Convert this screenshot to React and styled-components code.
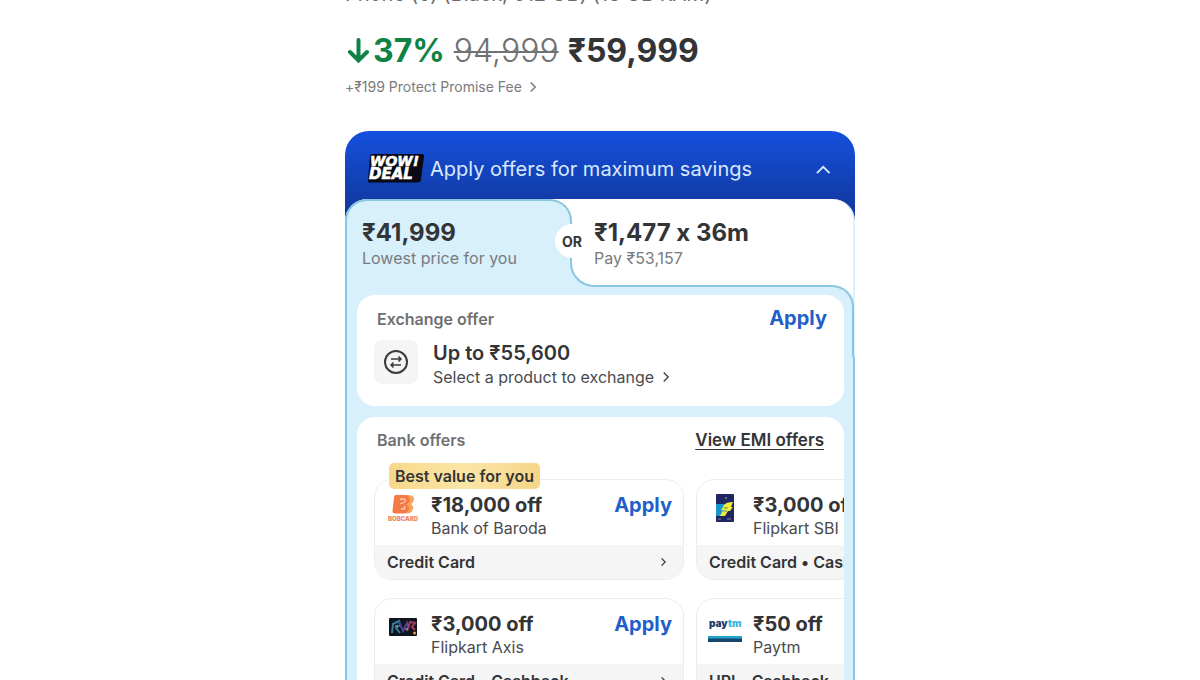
import React from "react";
import styled, { createGlobalStyle } from "styled-components";

const line = "#8ac6e0";
const sky = "#d8effc";
const ink = "#333436";
const muted = "#7a7b7d";
const link = "#1f5fcb";

const GlobalStyle = createGlobalStyle`
  *, *::before, *::after { box-sizing: border-box; }
  html, body { margin: 0; height: 100%; overflow: hidden; background: #fff; }
  body { font-family: Inter, "Liberation Sans", sans-serif; font-feature-settings: "calt" 0; color: ${ink}; }
  button { font: inherit; font-feature-settings: inherit; color: inherit; background: none; border: 0; padding: 0; cursor: pointer; text-align: left; }
  a { color: inherit; text-decoration: none; }
  h1, h2, p { margin: 0; }
  svg { display: block; flex: none; }
`;

const Page = styled.main`
  width: 100%;
  max-width: 510px;
  margin: -20px auto 0;
`;

const Title = styled.h1`
  font-size: 20px;
  line-height: 28px;
  font-weight: 400;
  white-space: nowrap;
  color: #6a6b6d;
`;

const PriceRow = styled.div`
  display: flex;
  align-items: center;
  gap: 9px;
  margin-top: 21px;
  font-size: 32px;
  line-height: 44px;
  font-weight: 700;
`;

const Discount = styled.span`
  display: flex;
  align-items: center;
  gap: 4px;
  color: #0e8345;
`;

const OldPrice = styled.s`
  font-weight: 300;
  color: #707173;
  text-decoration-thickness: 2px;
`;

const FeeLink = styled.a`
  display: flex;
  align-items: center;
  gap: 8px;
  margin-top: 4px;
  font-size: 14px;
  line-height: 20px;
  color: ${muted};
`;

const Deal = styled.section`
  margin-top: 34px;
  border-radius: 24px 24px 0 0;
  background: linear-gradient(#1450de, #123ba6 70px, #12389c) no-repeat top / 100% 88px;
`;

const DealHeader = styled.button`
  display: flex;
  align-items: center;
  gap: 5px;
  width: 100%;
  height: 68px;
  padding: 8px 25px 0 22px;
  font-size: 20px;
  line-height: 28px;
  color: #d9e9ff;

  & > span { flex: 1; }
`;

const Panel = styled.div`
  border-radius: 22px 22px 0 0;
  background: #fff;
  border-right: 2px solid #dff1fb;
`;

const Tabs = styled.div`
  position: relative;
  z-index: 1;
  display: grid;
  grid-template-columns: 227px 1fr;
  height: 88px;
`;

const Tab = styled.button`
  position: relative;
  display: flex;
  flex-direction: column;
  padding: 19px 16px 0;
  font-size: 16px;
  line-height: 22px;
  color: ${muted};

  & > * { position: relative; z-index: 1; }

  & > strong {
    font-size: 24px;
    line-height: 29px;
    font-weight: 700;
    color: ${ink};
  }
`;

const ActiveTab = styled(Tab)`
  background: ${sky};
  border: 2px solid ${line};
  border-bottom: 0;
  border-radius: 22px 22px 0 0;
  padding: 17px 15px 0;

  &::after {
    content: "";
    position: absolute;
    left: 0;
    right: -24px;
    bottom: 0;
    height: 24px;
    background: ${sky};
    z-index: 0;
  }
`;

const OtherTab = styled(Tab)`
  padding-left: 22px;

  &::before {
    content: "";
    position: absolute;
    left: -2px;
    top: 40px;
    bottom: 0;
    width: 26px;
    background: #fff;
    border: solid ${line};
    border-width: 0 0 2px 2px;
    border-bottom-left-radius: 24px;
  }
`;

const OrBadge = styled.span`
  && { position: absolute; }
  left: -17px;
  top: 25px;
  width: 34px;
  height: 34px;
  border-radius: 50%;
  background: #fff;
  color: ${ink};
  font-size: 14px;
  line-height: 36px;
  font-weight: 700;
  text-align: center;
`;

const Body = styled.div`
  position: relative;
  display: grid;
  grid-template-columns: minmax(0, 1fr);
  gap: 11px;
  margin: -2px -2px 0 0;
  padding: 10px 11px 0 10px;
  background: ${sky};
  border-left: 2px solid ${line};
  border-top-right-radius: 22px;

  &::before {
    content: "";
    position: absolute;
    left: 247px;
    right: 1px;
    top: 0;
    height: 72px;
    border: solid ${line};
    border-width: 2px 2px 0 0;
    border-top-right-radius: 22px;
  }

  &::after {
    content: "";
    position: absolute;
    right: 0;
    top: 72px;
    bottom: 0;
    width: 2px;
    background: ${line};
  }
`;

const Card = styled.section`
  position: relative;
  z-index: 1;
  overflow: hidden;
  padding: 11px 17px 17px;
  border-radius: 18px;
  background: #fff;
`;

const CardHead = styled.header`
  display: flex;
  align-items: baseline;
  justify-content: space-between;
  padding: 0 0 0 3px;

  & > h2 {
    font-size: 16px;
    line-height: 24px;
    font-weight: 600;
    color: #6f7072;
  }
`;

const ApplyButton = styled.button`
  align-self: start;
  font-size: 20px;
  line-height: 24px;
  font-weight: 700;
  color: ${link};

  ${CardHead} & { align-self: baseline; }
`;

const EmiLink = styled.a`
  margin-right: 3px;
  font-size: 17px;
  line-height: 24px;
  font-weight: 600;
  text-decoration: underline;
  text-decoration-thickness: 1px;
  text-underline-offset: 3px;
`;

const ExchangeRow = styled.div`
  display: flex;
  gap: 15px;
  margin-top: 9px;
`;

const IconTile = styled.span`
  display: grid;
  place-items: center;
  width: 44px;
  height: 44px;
  border-radius: 8px;
  background: #f5f5f5;
`;

const ExchangeText = styled.div`
  padding-bottom: 1px;

  & > p {
    font-size: 20px;
    line-height: 26px;
    font-weight: 600;
  }

  & > a {
    display: flex;
    align-items: center;
    gap: 9px;
    font-size: 16px;
    line-height: 22px;
    color: #4a4b4d;
  }
`;

const OfferGrid = styled.div`
  display: grid;
  grid-template-columns: 310px 310px;
  gap: 18px 12px;
  margin-top: 27px;
`;

const Offer = styled.article`
  position: relative;
  border: 1px solid #ececec;
  border-radius: 18px;
`;

const OfferMain = styled.div`
  display: grid;
  grid-template-columns: 34px 1fr auto;
  column-gap: 11px;
  padding: 13px 11px 6px;
`;

const OfferText = styled.div`
  white-space: nowrap;
  font-size: 16px;
  line-height: 22px;
  color: #4a4b4d;

  & > strong {
    display: block;
    font-size: 20px;
    line-height: 24px;
    font-weight: 700;
    color: ${ink};
  }
`;

const Logo = styled.span`
  display: grid;
  place-items: center;
  height: 30px;
`;

const OfferFoot = styled.button`
  display: flex;
  align-items: center;
  justify-content: space-between;
  width: 100%;
  height: 34px;
  padding: 0 17px 0 12px;
  border-radius: 0 0 17px 17px;
  background: #f5f5f5;
  font-size: 16px;
  font-weight: 600;
`;

const BestBadge = styled.span`
  position: absolute;
  left: 14px;
  top: -17px;
  padding: 0 6px;
  border-radius: 5px;
  background: linear-gradient(90deg, #f6d88a, #fbe6a6 50%, #f5d587);
  font-size: 16px;
  line-height: 26px;
  font-weight: 600;
`;

function Chevron({ size = 10, up = false, width = 1.5, color = "currentColor" }) {
  return (
    <svg width={up ? size * 1.6 : size * 0.6} height={size} viewBox={up ? "0 0 16 10" : "0 0 6 10"} fill="none" stroke={color} strokeWidth={width} aria-hidden="true">
      <path d={up ? "M1 9 8 2l7 7" : "M.7.5 5.2 5 .7 9.5"} />
    </svg>
  );
}

function WowDeal() {
  return (
    <svg width="58" height="32" viewBox="0 0 58 32" role="img" aria-label="WOW! DEAL">
      <path d="M5 1H55Q57.500 1 57 3.500L54 26.500Q53.500 29.500 51 29.500H3Q.5 30 1 27L3 3.500Q3.200 1 5 1Z" fill="#080b16" />
      <g fill="#fff" stroke="#fff" strokeWidth="0.6" fontFamily="'DejaVu Sans', sans-serif" fontWeight="700" fontStyle="italic">
        <text x="3" y="13" fontSize="14">WOW!</text>
        <text x="2" y="26" fontSize="15">DEAL</text>
      </g>
    </svg>
  );
}

function BobLogo() {
  return (
    <svg width="32" height="30" viewBox="0 0 32 30" aria-hidden="true">
      <path d="M9 2h10q6 0 5 5-.5 3-3 4 3 1.500 2 5-1 4.500-7 4.500H8q-3 0-2.500-3L7 5q.2-3 2-3Z" fill="#f47a45" />
      <path d="M20 2q8 0 7 5-.6 3-3 4 3 2 2 5-1 4.500-7 4.500 3-2 3-5 0-2-3-4 4-2 4-5 0-2-3-4.500Z" fill="#f9a55e" />
      <path d="M13 6h4q3 1 0 3.500l-4 1.500m1 5h3q2-1 0-3" fill="none" stroke="#ffd0ae" strokeWidth="1.300" />
      <text x="1" y="28" fontSize="6" fontWeight="900" fontFamily="Inter, sans-serif" fill="#ee8a63">BOBCARD</text>
    </svg>
  );
}

function SbiLogo() {
  return (
    <svg width="18" height="28" viewBox="0 0 18 28" aria-hidden="true">
      <rect width="18" height="28" rx="1" fill="#20265f" />
      <path d="M0 10h9l-3 12H0Z" fill="#1596cf" />
      <path d="M8 11q2-3 9-3l-2 5h2l-3 4h-2l-3 5H4l3-6H5l2-3Z" fill="#f3ec3b" />
      <path d="M8 14h4m-5 3h4" stroke="#3a9b73" strokeWidth="1" />
      <circle cx="10" cy="4" r="1" fill="#7e83b5" />
      <path d="M2 25h3m6 0h4" stroke="#8388b7" strokeWidth="1" />
    </svg>
  );
}

function AxisLogo() {
  return (
    <svg width="28" height="18" viewBox="0 0 28 18" aria-hidden="true">
      <rect width="28" height="18" rx="1" fill="#11131f" />
      <path d="m3 15 1-9 6-3 1 4-4 3 4 5" fill="none" stroke="#347f96" strokeWidth="2" />
      <path d="m10 4 4 9 4-8 2 5" fill="none" stroke="#4b449b" strokeWidth="2" />
      <path d="m18 13 3-9 5 1-3 4 3 3" fill="none" stroke="#a63c62" strokeWidth="2" />
      <path d="M6 8h3m7 3h3" stroke="#b1bcc8" strokeWidth="1" />
      <circle cx="25.500" cy="15" r="1.500" fill="#e69b54" />
    </svg>
  );
}

function PaytmLogo() {
  return (
    <svg width="34" height="30" viewBox="0 0 34 30" aria-hidden="true">
      <g fontFamily="Inter, sans-serif" fontSize="10" fontWeight="900">
        <text x="1" y="15" fill="#1d3a6d">pay<tspan fill="#35b9df">tm</tspan></text>
      </g>
      <path d="M0 24h34v3H0Z" fill="#20a5cb" />
      <path d="M0 26.500h34V30H0Z" fill="#17456b" />
    </svg>
  );
}

function ExchangeIcon() {
  return (
    <svg width="26" height="26" viewBox="0 0 26 26" fill="none" stroke="#3a3b3d" strokeWidth="1.500" aria-hidden="true">
      <circle cx="13" cy="13" r="11" strokeWidth="2" />
      <path d="M8 10h10M15.500 7.500 18 10l-2.500 2.500M18 16H8M10.500 13.500 8 16l2.500 2.500" />
    </svg>
  );
}

const offers = [
  { amount: "₹18,000 off", bank: "Bank of Baroda", kind: "Credit Card", Mark: BobLogo, best: true },
  { amount: "₹3,000 off", bank: "Flipkart SBI", kind: "Credit Card • Cashback", Mark: SbiLogo },
  { amount: "₹3,000 off", bank: "Flipkart Axis", kind: "Credit Card • Cashback", Mark: AxisLogo },
  { amount: "₹50 off", bank: "Paytm", kind: "UPI • Cashback", Mark: PaytmLogo },
];

export default function App() {
  return (
    <>
      <GlobalStyle />
      <Page>
        <Title>Phone (3) (Black, 512 GB) (16 GB RAM)</Title>
        <PriceRow>
          <Discount>
            <svg width="24" height="28" viewBox="0 0 24 28" fill="none" stroke="currentColor" strokeWidth="4" strokeLinecap="round" aria-hidden="true">
              <path d="M13.500 3v20M5 15l8.500 8.500L22 15" />
            </svg>
            37%
          </Discount>
          <OldPrice>94,999</OldPrice>
          <span>₹59,999</span>
        </PriceRow>
        <FeeLink href="#fee">+₹199 Protect Promise Fee <Chevron /></FeeLink>

        <Deal>
          <DealHeader type="button" aria-expanded="true">
            <WowDeal />
            <span>Apply offers for maximum savings</span>
            <Chevron up size={9} width={2} color="#d9e9ff" />
          </DealHeader>
          <Panel>
            <Tabs role="tablist">
              <ActiveTab type="button" role="tab" aria-selected="true">
                <strong>₹41,999</strong>
                <span>Lowest price for you</span>
              </ActiveTab>
              <OtherTab type="button" role="tab" aria-selected="false">
                <OrBadge>OR</OrBadge>
                <strong>₹1,477 x 36m</strong>
                <span>Pay ₹53,157</span>
              </OtherTab>
            </Tabs>
            <Body>
              <Card>
                <CardHead>
                  <h2>Exchange offer</h2>
                  <ApplyButton type="button">Apply</ApplyButton>
                </CardHead>
                <ExchangeRow>
                  <IconTile><ExchangeIcon /></IconTile>
                  <ExchangeText>
                    <p>Up to ₹55,600</p>
                    <a href="#exchange">Select a product to exchange <Chevron /></a>
                  </ExchangeText>
                </ExchangeRow>
              </Card>
              <Card>
                <CardHead>
                  <h2>Bank offers</h2>
                  <EmiLink href="#emi">View EMI offers</EmiLink>
                </CardHead>
                <OfferGrid>
                  {offers.map(({ amount, bank, kind, Mark, best }) => (
                    <Offer key={bank}>
                      {best && <BestBadge>Best value for you</BestBadge>}
                      <OfferMain>
                        <Logo><Mark /></Logo>
                        <OfferText><strong>{amount}</strong>{bank}</OfferText>
                        <ApplyButton type="button">Apply</ApplyButton>
                      </OfferMain>
                      <OfferFoot type="button">{kind} <Chevron size={8} /></OfferFoot>
                    </Offer>
                  ))}
                </OfferGrid>
              </Card>
            </Body>
          </Panel>
        </Deal>
      </Page>
    </>
  );
}
